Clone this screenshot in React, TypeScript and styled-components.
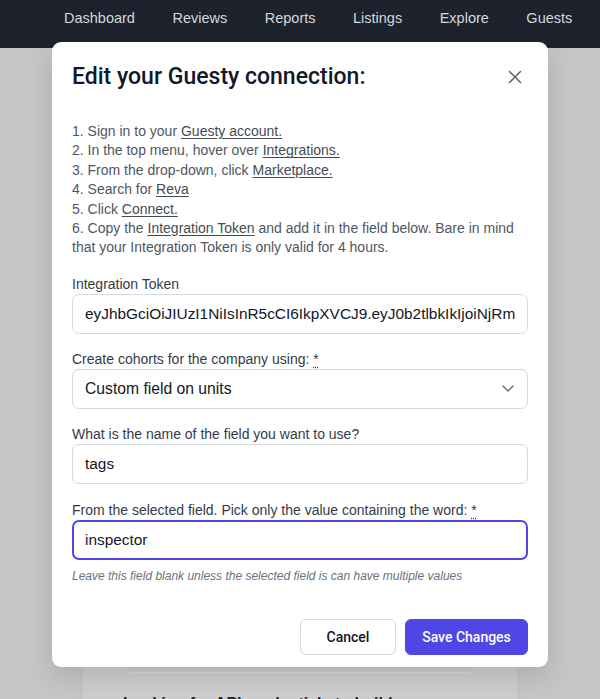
import styled, { createGlobalStyle } from 'styled-components'

const GlobalStyle = createGlobalStyle`
    html, body {
        margin: 0;
        padding: 0;
        background: #c4c5c7;
        font-family: "Liberation Sans", Arial, sans-serif;
        overflow: hidden;
    }
    * {
        box-sizing: border-box;
    }
`

const Page = styled.div`
    position: relative;
    width: 600px;
    height: 699px;
    overflow: hidden;
    background: #c4c5c7;
`

const Nav = styled.nav`
    height: 48px;
    background: #1d222c;
    display: flex;
    align-items: center;
    gap: 37.5px;
    padding-left: 64px;
    padding-bottom: 12px;
`

const NavItem = styled.a`
    font-size: 14.5px;
    color: #d3d7de;
    white-space: nowrap;
`

const Main = styled.main`
    padding: 24px 83px 0;
`

const BackCard = styled.section`
    background: #cdcdcd;
    padding: 40px 40px 0;
`

const BackPanel = styled.div`
    height: 561px;
    border: 1px solid #d6d6d6;
    border-radius: 8px;
    background: #c9c9c9;
`

const BackHeading = styled.h3`
    margin: 19px 0 0;
    font-size: 16px;
    font-weight: 700;
    line-height: 24px;
    color: #1f2226;
`

/* modal over the page */
const Modal = styled.div`
    position: absolute;
    top: 42px;
    left: 52px;
    width: 496px;
    background: #ffffff;
    border-radius: 9px;
    padding: 20px 20px 12px;
    box-shadow: 0 10px 25px rgba(0, 0, 0, 0.12);
`

const Header = styled.div`
    display: flex;
    align-items: center;
    justify-content: space-between;
`

const Title = styled.h2`
    margin: 0;
    font-family: Roboto, "Liberation Sans", sans-serif;
    font-size: 23px;
    font-weight: 500;
    line-height: 30px;
    color: #111827;
`

const CloseButton = styled.button`
    border: 0;
    background: none;
    padding: 0;
    margin-right: 6px;
    display: flex;
    cursor: pointer;
`

const Steps = styled.ol`
    list-style: none;
    margin: 30px 0 0;
    padding: 0;
    font-size: 14px;
    line-height: 19.4px;
    color: #50565f;
`

const Link = styled.a`
    color: #454b54;
    text-decoration: underline;
    text-underline-offset: 2px;
`

const Field = styled.div<{ $gap: number }>`
    margin-top: ${(p) => p.$gap}px;
`

const Label = styled.label`
    display: block;
    font-size: 14px;
    line-height: 20px;
    color: #343b47;
`

const Req = styled.abbr`
    text-decoration: underline dotted;
    text-underline-offset: 3px;
`

const Input = styled.input<{ $focus?: boolean }>`
    display: block;
    width: 100%;
    height: 40px;
    padding: 0 12px;
    border-radius: 7px;
    font-family: "Liberation Sans", Arial, sans-serif;
    font-size: 15.4px;
    color: #111827;
    background: #fff;
    outline: none;
    border: ${(p) => (p.$focus ? '2px solid #5046e5' : '1px solid #d6d9de')};
    padding-left: ${(p) => (p.$focus ? '11px' : '12px')};
`

const SelectBox = styled.div`
    display: flex;
    align-items: center;
    justify-content: space-between;
    height: 40px;
    padding: 0 13px 0 12px;
    border: 1px solid #d6d9de;
    border-radius: 7px;
    font-size: 15.7px;
    color: #111827;
`

const Help = styled.p`
    margin: 8px 0 0;
    font-size: 12px;
    line-height: 16px;
    font-style: italic;
    color: #6b7280;
`

const Footer = styled.div`
    display: flex;
    justify-content: flex-end;
    gap: 9px;
    margin-top: 35px;
`

const Button = styled.button<{ $primary?: boolean }>`
    height: 36px;
    border-radius: 6px;
    font-family: Roboto, "Liberation Sans", sans-serif;
    font-size: 14px;
    font-weight: 500;
    cursor: pointer;
    padding: 0;
    width: ${(p) => (p.$primary ? '123px' : '96px')};
    border: ${(p) => (p.$primary ? '1px solid #4f46e5' : '1px solid #d6d9de')};
    background: ${(p) => (p.$primary ? '#4f46e5' : '#ffffff')};
    color: ${(p) => (p.$primary ? '#ffffff' : '#111827')};
`

const token = 'eyJhbGciOiJIUzI1NiIsInR5cCI6IkpXVCJ9.eyJ0b2tlbkIkIjoiNjRm'

export default function App() {
    return (
        <Page>
            <GlobalStyle />
            <Nav>
                {['Dashboard', 'Reviews', 'Reports', 'Listings', 'Explore', 'Guests'].map((n) => (
                    <NavItem key={n}>{n}</NavItem>
                ))}
            </Nav>
            <Main>
                <BackCard>
                    <BackPanel />
                    <BackHeading>Looking for API credentials to build your own?</BackHeading>
                </BackCard>
            </Main>

            <Modal>
                <Header>
                    <Title>Edit your Guesty connection:</Title>
                    <CloseButton aria-label="Close">
                        <svg width="14" height="14" viewBox="0 0 14 14" fill="none" stroke="#5f6570" strokeWidth="1.6" strokeLinecap="round">
                            <path d="M1.5 1.5l11 11M12.5 1.5l-11 11" />
                        </svg>
                    </CloseButton>
                </Header>

                <Steps>
                    <li>1. Sign in to your <Link>Guesty account.</Link></li>
                    <li>2. In the top menu, hover over <Link>Integrations.</Link></li>
                    <li>3. From the drop-down, click <Link>Marketplace.</Link></li>
                    <li>4. Search for <Link>Reva</Link></li>
                    <li>5. Click <Link>Connect.</Link></li>
                    <li>
                        6. Copy the <Link>Integration Token</Link> and add it in the field below. Bare in mind
                        that your Integration Token is only valid for 4 hours.
                    </li>
                </Steps>

                <Field $gap={16}>
                    <Label>Integration Token</Label>
                    <Input defaultValue={token} />
                </Field>

                <Field $gap={15}>
                    <Label>
                        Create cohorts for the company using: <Req title="required">*</Req>
                    </Label>
                    <SelectBox>
                        <span>Custom field on units</span>
                        <svg width="12" height="7" viewBox="0 0 12 7" fill="none" stroke="#6b7280" strokeWidth="1.5" strokeLinecap="round" strokeLinejoin="round">
                            <path d="M1 1l5 5 5-5" />
                        </svg>
                    </SelectBox>
                </Field>

                <Field $gap={15}>
                    <Label>What is the name of the field you want to use?</Label>
                    <Input defaultValue="tags" />
                </Field>

                <Field $gap={16}>
                    <Label>
                        From the selected field. Pick only the value containing the word: <Req title="required">*</Req>
                    </Label>
                    <Input $focus defaultValue="inspector" />
                    <Help>Leave this field blank unless the selected field is can have multiple values</Help>
                </Field>

                <Footer>
                    <Button>Cancel</Button>
                    <Button $primary>Save Changes</Button>
                </Footer>
            </Modal>
        </Page>
    )
}
